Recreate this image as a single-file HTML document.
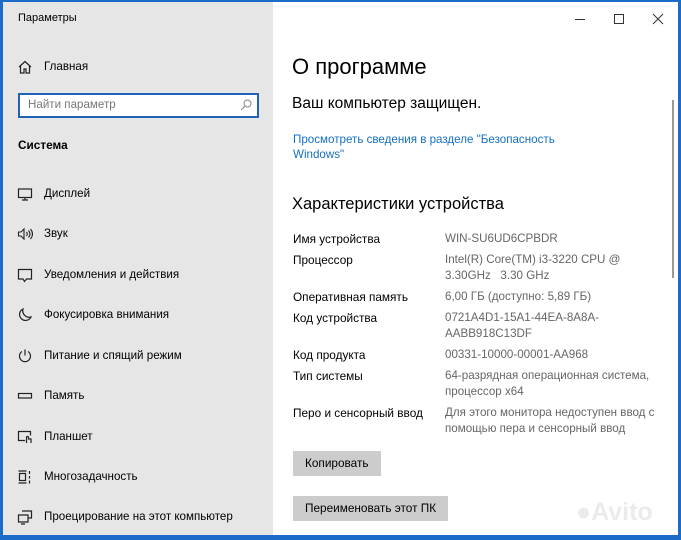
<!DOCTYPE html>
<html><head><meta charset="utf-8"><style>
*{margin:0;padding:0;box-sizing:border-box}
body{width:681px;height:540px;overflow:hidden;background:#1a6cc8;font-family:"Segoe UI","Liberation Sans","DejaVu Sans",sans-serif;position:relative;color:#000}
.side{position:absolute;left:3px;top:2px;width:270px;height:533px;background:#e6e6e6}
.main{position:absolute;left:273px;top:2px;width:405px;height:533px;background:#fff}
.a{position:absolute;white-space:nowrap}
.it{font-size:11.6px;left:44px;line-height:16px}
.ic{position:absolute;left:17px}
.lab{left:293px;font-size:11.8px;line-height:16px}
.val{left:445px;font-size:11.6px;line-height:16px;color:#666}
.btn{position:absolute;left:293px;background:#ccc;font-size:11.8px;line-height:25px;padding:0 12px;height:25px;white-space:nowrap}
</style></head><body>
<div class="side"></div>
<div class="main"></div>
<div class="a" style="left:18px;top:12px;font-size:11px">Параметры</div>
<svg class="ic" style="top:59px" width="16" height="16" viewBox="0 0 16 16" fill="none" stroke="#222" stroke-width="1.2"><path d="M2 8L8 2.5 14 8M3.5 6.8V14h3.5v-4h2v4h3.5V6.8"/></svg>
<div class="a it" style="top:59px">Главная</div>
<div class="a" style="left:18px;top:93px;width:241px;height:25px;border:2px solid #1f62b8;background:#fff"></div>
<div class="a" style="left:28px;top:97px;font-size:11.6px;color:#777;line-height:16px">Найти параметр</div>
<svg class="a" style="left:240px;top:99px" width="12" height="12" viewBox="0 0 12 12" fill="none" stroke="#888" stroke-width="1"><circle cx="7.5" cy="4.5" r="3.5"/><path d="M5 7L1 11"/></svg>
<div class="a" style="left:18px;top:137px;font-size:11.8px;font-weight:bold;line-height:16px">Система</div>

<svg class="ic" style="top:186px" width="16" height="16" viewBox="0 0 16 16" fill="none" stroke="#222" stroke-width="1.2"><rect x="1.5" y="3" width="13" height="8.5"/><path d="M8 11.5v2.5M5 14h6"/></svg>
<div class="a it" style="top:186px">Дисплей</div>
<svg class="ic" style="top:226px" width="16" height="16" viewBox="0 0 16 16" fill="none" stroke="#222" stroke-width="1.1"><path d="M1.5 6h2.5l3-3v10l-3-3H1.5z M9.5 6q1.5 2 0 4M11.5 4.5q3 3.5 0 7M13.5 3q4 5 0 10"/></svg>
<div class="a it" style="top:226px">Звук</div>
<svg class="ic" style="top:267px" width="16" height="16" viewBox="0 0 16 16" fill="none" stroke="#222" stroke-width="1.2"><path d="M1.5 2.5h13v9.5H9.5L7.5 14.5 6 12H1.5z"/></svg>
<div class="a it" style="top:267px">Уведомления и действия</div>
<svg class="ic" style="top:307px" width="16" height="16" viewBox="0 0 16 16" fill="none" stroke="#222" stroke-width="1.2"><path d="M6 2a6 6 0 1 0 8 8A6.5 6.5 0 0 1 6 2z"/></svg>
<div class="a it" style="top:307px">Фокусировка внимания</div>
<svg class="ic" style="top:348px" width="16" height="16" viewBox="0 0 16 16" fill="none" stroke="#222" stroke-width="1.2"><path d="M8 1.5v6M5 3.5a5.5 5.5 0 1 0 6 0"/></svg>
<div class="a it" style="top:348px">Питание и спящий режим</div>
<svg class="ic" style="top:388px" width="16" height="16" viewBox="0 0 16 16" fill="none" stroke="#222" stroke-width="1.2"><rect x="1.5" y="5.5" width="13" height="4.5"/></svg>
<div class="a it" style="top:388px">Память</div>
<svg class="ic" style="top:429px" width="16" height="16" viewBox="0 0 16 16" fill="none" stroke="#222" stroke-width="1.2"><path d="M8 11.5H1.5v-9h12v4M9.5 14V8.5a1 1 0 0 1 2 0V10h2.5v4"/></svg>
<div class="a it" style="top:429px">Планшет</div>
<svg class="ic" style="top:469px" width="16" height="16" viewBox="0 0 16 16" fill="none" stroke="#222" stroke-width="1.2"><path d="M1.5 2h8M1.5 14h8M2.5 4.5h6v7h-6zM12.5 2v3M12.5 7v2.5M12.5 11.5v3"/></svg>
<div class="a it" style="top:469px">Многозадачность</div>
<svg class="ic" style="top:509px" width="16" height="16" viewBox="0 0 16 16" fill="none" stroke="#222" stroke-width="1.2"><path d="M5 2h9.5v7H11M1.5 6h9.5v7H1.5zM4 15h4"/></svg>
<div class="a it" style="top:509px">Проецирование на этот компьютер</div>

<svg class="a" style="left:570px;top:13px" width="100" height="12" viewBox="0 0 100 12" fill="none" stroke="#333" stroke-width="1"><path d="M5 6.5h10M44.5 1.5h9v9h-9zM83 1l10 10M93 1L83 11"/></svg>
<div class="a" style="left:292px;top:52px;font-size:22px;line-height:30px;font-weight:300">О программе</div>
<div class="a" style="left:292px;top:94px;font-size:15.5px;line-height:20px">Ваш компьютер защищен.</div>
<div class="a" style="left:293px;top:132px;font-size:11.6px;line-height:15px;color:#1570c0">Просмотреть сведения в разделе "Безопасность<br>Windows"</div>
<div class="a" style="left:292px;top:193px;font-size:16.5px;line-height:22px">Характеристики устройства</div>
<div class="a" style="left:672px;top:100px;width:2px;height:178px;background:#999"></div>

<div class="a lab" style="top:231px">Имя устройства</div><div class="a val" style="top:231px">WIN-SU6UD6CPBDR</div>
<div class="a lab" style="top:252px">Процессор</div><div class="a val" style="top:252px">Intel(R) Core(TM) i3-3220 CPU @<br>3.30GHz&nbsp;&nbsp; 3.30 GHz</div>
<div class="a lab" style="top:289px">Оперативная память</div><div class="a val" style="top:289px">6,00 ГБ (доступно: 5,89 ГБ)</div>
<div class="a lab" style="top:310px">Код устройства</div><div class="a val" style="top:310px">0721A4D1-15A1-44EA-8A8A-<br>AABB918C13DF</div>
<div class="a lab" style="top:347px">Код продукта</div><div class="a val" style="top:347px">00331-10000-00001-AA968</div>
<div class="a lab" style="top:368px">Тип системы</div><div class="a val" style="top:368px">64-разрядная операционная система,<br>процессор x64</div>
<div class="a lab" style="top:405px">Перо и сенсорный ввод</div><div class="a val" style="top:405px">Для этого монитора недоступен ввод с<br>помощью пера и сенсорный ввод</div>
<div class="btn" style="top:451px">Копировать</div>
<div class="btn" style="top:496px">Переименовать этот ПК</div>
<div class="a" style="left:576px;top:498px;font-size:25px;font-weight:bold;color:#ebebeb">●Avito</div>
</body></html>
